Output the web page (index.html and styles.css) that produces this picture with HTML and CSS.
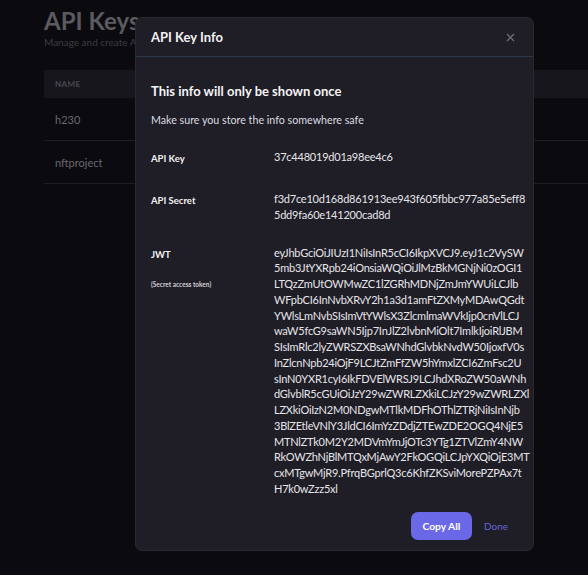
FILE: index.html
```html
<!DOCTYPE html>
<html lang="en">
<head>
<meta charset="utf-8">
<title>API Keys</title>
<link rel="stylesheet" href="styles.css">
</head>
<body>
<main class="page">
  <h1 class="title">API Keys</h1>
  <p class="subtitle">Manage and create API keys for your projects</p>
  <div class="table">
    <div class="thead">Name</div>
    <div class="trow">h230</div>
    <div class="trow">nftproject</div>
  </div>
</main>

<div class="modal" role="dialog">
  <div class="modal-header">
    <h2 class="modal-title">API Key Info</h2>
    <button class="close" aria-label="Close">
      <svg width="9" height="9" viewBox="0 0 9 9"><path d="M1 1L8 8M8 1L1 8" stroke="#6c6b74" stroke-width="1.3" fill="none"/></svg>
    </button>
  </div>
  <div class="modal-body">
    <h3 class="warn">This info will only be shown once</h3>
    <p class="note">Make sure you store the info somewhere safe</p>
    <div class="rows">
      <div class="row">
        <div class="label">API Key</div>
        <div class="value">37c448019d01a98ee4c6</div>
      </div>
      <div class="row">
        <div class="label">API Secret</div>
        <div class="value">f3d7ce10d168d861913ee943f605fbbc977a85e5eff8<br>5dd9fa60e141200cad8d</div>
      </div>
      <div class="row">
        <div class="label">JWT<div class="sublabel">(Secret access token)</div></div>
        <div class="value">eyJhbGciOiJIUzI1NiIsInR5cCI6IkpXVCJ9.eyJ1c2VySW<br>5mb3JtYXRpb24iOnsiaWQiOiJlMzBkMGNjNi0zOGI1<br>LTQzZmUtOWMwZC1lZGRhMDNjZmJmYWUiLCJlb<br>WFpbCI6InNvbXRvY2h1a3d1amFtZXMyMDAwQGdt<br>YWlsLmNvbSIsImVtYWlsX3ZlcmlmaWVkIjp0cnVlLCJ<br>waW5fcG9saWN5Ijp7InJlZ2lvbnMiOlt7ImlkIjoiRlJBM<br>SIsImRlc2lyZWRSZXBsaWNhdGlvbkNvdW50IjoxfV0s<br>InZlcnNpb24iOjF9LCJtZmFfZW5hYmxlZCI6ZmFsc2U<br>sInN0YXR1cyI6IkFDVElWRSJ9LCJhdXRoZW50aWNh<br>dGlvblR5cGUiOiJzY29wZWRLZXkiLCJzY29wZWRLZXl<br>LZXkiOiIzN2M0NDgwMTlkMDFhOThlZTRjNiIsInNjb<br>3BlZEtleVNlY3JldCI6ImYzZDdjZTEwZDE2OGQ4NjE5<br>MTNlZTk0M2Y2MDVmYmJjOTc3YTg1ZTVlZmY4NW<br>RkOWZhNjBlMTQxMjAwY2FkOGQiLCJpYXQiOjE3MT<br>cxMTgwMjR9.PfrqBGprlQ3c6KhfZKSviMorePZPAx7t<br>H7k0wZzz5xl</div>
      </div>
    </div>
    <div class="footer">
      <button class="btn-primary">Copy All</button>
      <button class="btn-link">Done</button>
    </div>
  </div>
</div>
</body>
</html>
```

FILE: styles.css
```css
* { box-sizing: border-box; }

html, body {
  margin: 0;
  padding: 0;
  background: #0b0a0f;
  font-family: Lato, "Open Sans", sans-serif;
  height: 100%;
  overflow: hidden;
}

.page {
  padding: 6px 0 0 44px;
}

.title {
  margin: 0;
  font-size: 24px;
  line-height: 29px;
  font-weight: 700;
  color: #5b5a5f;
}

.subtitle {
  margin: 0;
  font-size: 10px;
  line-height: 14px;
  color: #3d3c43;
  white-space: nowrap;
}

.table {
  margin-top: 21px;
}

.thead {
  height: 28px;
  background: #17161c;
  padding-left: 11px;
  font-size: 8px;
  font-weight: 700;
  letter-spacing: 0.4px;
  text-transform: uppercase;
  color: #4a4951;
  display: flex;
  align-items: center;
}

.trow {
  height: 43px;
  border-bottom: 1px solid #1d1c23;
  padding-left: 11px;
  font-size: 11px;
  color: #6a6970;
  display: flex;
  align-items: center;
}

.modal {
  position: absolute;
  top: 17px;
  left: 135px;
  width: 399px;
  background: #1f1d26;
  border: 1px solid #292831;
  border-radius: 7px;
}

.modal-header {
  height: 39px;
  border-bottom: 1px solid #2a3a4a;
  padding: 0 15px;
  display: flex;
  align-items: center;
  justify-content: space-between;
}

.modal-title {
  margin: 0;
  font-size: 13px;
  font-weight: 700;
  color: #f2f2f4;
}

.close {
  background: none;
  border: 0;
  padding: 0;
  margin-right: 3px;
  width: 9px;
  height: 9px;
  display: flex;
}

.modal-body {
  padding: 25px 15px 10px 15px;
}

.warn {
  margin: 0;
  font-size: 13px;
  line-height: 18px;
  font-weight: 700;
  color: #f4f4f6;
}

.note {
  margin: 12px 0 0;
  font-size: 10.7px;
  line-height: 16px;
  color: #dcdce0;
}

.rows {
  margin-top: 21px;
  display: flex;
  flex-direction: column;
  gap: 22px;
}

.row {
  display: grid;
  grid-template-columns: 123px 1fr;
}

.label {
  font-size: 9.5px;
  line-height: 20px;
  font-weight: 700;
  color: #f2f2f4;
}

.sublabel {
  margin-top: 15px;
  font-size: 6.5px;
  line-height: 10px;
  font-weight: 700;
  color: #cfcfd4;
}

.value {
  font-size: 11px;
  line-height: 15.75px;
  letter-spacing: -0.22px;
  color: #e6e6ea;
  white-space: nowrap;
}

.footer {
  margin-top: 15px;
  display: flex;
  justify-content: flex-end;
  align-items: center;
  gap: 2px;
}

.btn-primary {
  height: 28px;
  width: 61px;
  padding: 0;
  border: 0;
  border-radius: 7px;
  background: #6b68e8;
  color: #ffffff;
  font-family: inherit;
  font-size: 10.3px;
  font-weight: 700;
}

.btn-link {
  height: 28px;
  padding: 0 10px;
  border: 0;
  background: none;
  color: #6664d6;
  font-family: inherit;
  font-size: 10px;
}
```
